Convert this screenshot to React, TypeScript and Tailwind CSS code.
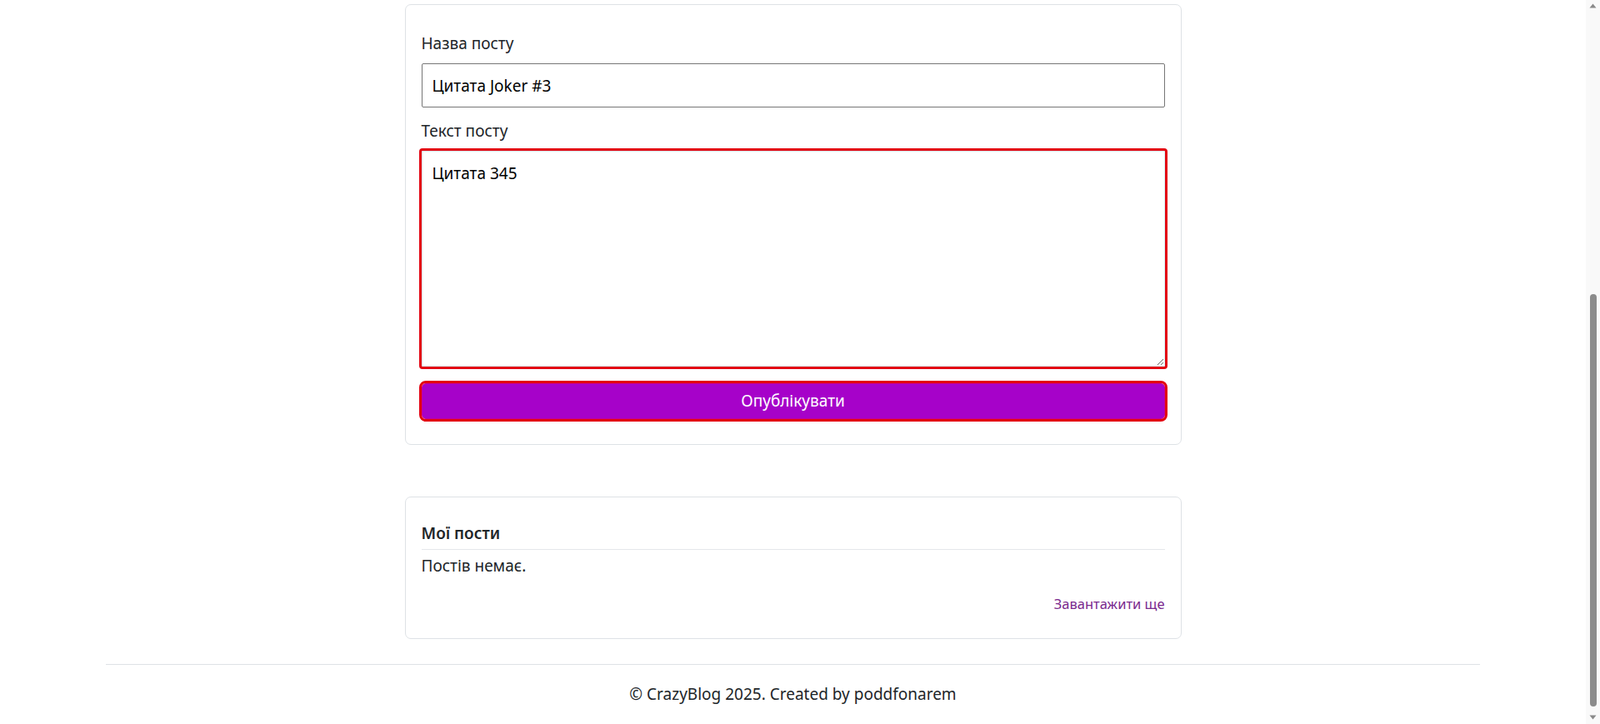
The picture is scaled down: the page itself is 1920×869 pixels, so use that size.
import React from 'react';

const font = { fontFamily: '"Noto Sans", "Open Sans", sans-serif' };

const FakeScrollbar: React.FC = () => (
  <div className="w-[17px] shrink-0 bg-[#f9f9f9] flex flex-col items-center">
    {/* up arrow */}
    <svg width="9" height="6" viewBox="0 0 9 6" className="mt-[4px]">
      <path d="M4.5 0.5 L8.5 5.5 L0.5 5.5 Z" fill="#8a8a8a" />
    </svg>
    <div className="flex-1 w-full flex flex-col items-center pt-[343px] pb-[10px]">
      <div className="w-[8px] flex-1 rounded-full bg-[#8b8b8b]" />
    </div>
    <svg width="9" height="6" viewBox="0 0 9 6" className="mb-[5px]">
      <path d="M0.5 0.5 L8.5 0.5 L4.5 5.5 Z" fill="#8a8a8a" />
    </svg>
  </div>
);

export default function App() {
  return (
    <div className="flex h-[869px] w-full overflow-hidden bg-white text-[#212529]" style={font}>
      <div className="flex-1 flex flex-col items-center">
        {/* New post form */}
        <div className="mt-[5px] w-[932px] rounded-[7px] border border-[#dee2e6] bg-white px-[19px] pt-[34px] pb-[30px]">
          <label className="block text-[19px] leading-[24px] text-[#212529]">Назва посту</label>
          <input
            className="mt-[12px] block h-[53px] w-full rounded-[2px] border border-[#767676] px-[12px] text-[19px] text-black outline-none"
            style={font}
            defaultValue="Цитата Joker #3"
          />
          <label className="mt-[16px] block text-[19px] leading-[24px] text-[#212529]">Текст посту</label>
          <textarea
            className="mt-[12px] block h-[259px] w-full resize-y rounded-[1px] border border-[#d7f6f6] px-[12px] pt-[14px] text-[19px] leading-[24px] text-black outline-[3px] outline-solid outline-[#e3000f]"
            style={font}
            defaultValue="Цитата 345"
          />
          <button
            className="mt-[20px] flex h-[43px] w-full items-center justify-center rounded-[5px] border border-[#c000a0] bg-[#a602c9] text-[19px] text-white outline-[3px] outline-solid outline-[#e3000f]"
            style={font}
          >
            Опублікувати
          </button>
        </div>

        {/* My posts */}
        <div className="mt-[62px] w-[932px] rounded-[7px] border border-[#dee2e6] bg-white px-[19px] pt-[31px] pb-[29px]">
          <div className="text-[19px] font-semibold leading-[24px] text-[#212529]">Мої пости</div>
          <div className="mt-[7px] border-t border-[#e5e7eb]" />
          <div className="mt-[7px] text-[19px] leading-[24px] text-[#212529]">Постів немає.</div>
          <div className="mt-[22px] flex justify-end">
            <a className="cursor-pointer text-[16.5px] leading-[24px] text-[#7a2a8e]">Завантажити ще</a>
          </div>
        </div>

        {/* Footer */}
        <div className="mt-[30px] w-full px-[127px]">
          <div className="border-t border-[#dee2e6]" />
          <div className="mt-[23px] text-center text-[19px] leading-[24px] text-[#212529]">
            © CrazyBlog 2025. Created by poddfonarem
          </div>
        </div>
      </div>
      <FakeScrollbar />
    </div>
  );
}
